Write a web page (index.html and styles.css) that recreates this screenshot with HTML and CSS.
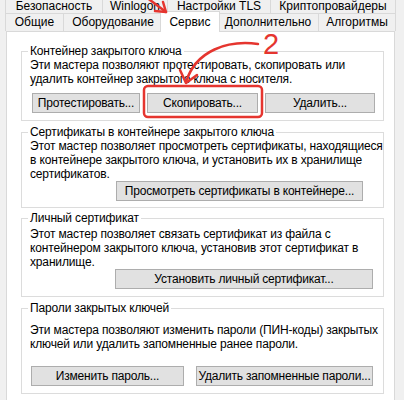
FILE: index.html
```html
<!DOCTYPE html>
<html lang="ru">
<head>
<meta charset="utf-8">
<link rel="stylesheet" href="styles.css">
</head>
<body>
<div class="root">
  <div class="tabs">
    <div class="tabrow row1">
      <div class="tab t-bez">Безопасность</div>
      <div class="tab t-win">Winlogon</div>
      <div class="tab t-tls">Настройки TLS</div>
      <div class="tab t-kri">Криптопровайдеры</div>
    </div>
    <div class="tabrow row2">
      <div class="tab t-obs">Общие</div>
      <div class="tab t-obo">Оборудование</div>
      <div class="tab tab-active">Сервис</div>
      <div class="tab t-dop">Дополнительно</div>
      <div class="tab t-alg">Алгоритмы</div>
    </div>
  </div>
  <div class="panel">
    <fieldset class="group g1">
      <legend>Контейнер закрытого ключа</legend>
      <p class="desc">Эти мастера позволяют протестировать, скопировать или<br>удалить контейнер закрытого ключа с носителя.</p>
      <div class="btnrow r1">
        <button class="btn b-test">Протестировать...</button>
        <button class="btn b-copy">Скопировать...</button>
        <button class="btn b-del">Удалить...</button>
      </div>
    </fieldset>
    <fieldset class="group g2">
      <legend>Сертификаты в контейнере закрытого ключа</legend>
      <p class="desc">Этот мастер позволяет просмотреть сертификаты, находящиеся<br>в контейнере закрытого ключа, и установить их в хранилище<br>сертификатов.</p>
      <div class="btnrow r2">
        <button class="btn b-view">Просмотреть сертификаты в контейнере...</button>
      </div>
    </fieldset>
    <fieldset class="group g3">
      <legend>Личный сертификат</legend>
      <p class="desc">Этот мастер позволяет связать сертификат из файла с<br>контейнером закрытого ключа, установив этот сертификат в<br>хранилище.</p>
      <div class="btnrow r3">
        <button class="btn b-inst">Установить личный сертификат...</button>
      </div>
    </fieldset>
    <fieldset class="group g4">
      <legend>Пароли закрытых ключей</legend>
      <p class="desc">Эти мастера позволяют изменить пароли (ПИН-коды) закрытых<br>ключей или удалить запомненные ранее пароли.</p>
      <div class="btnrow r4">
        <button class="btn b-chg">Изменить пароль...</button>
        <button class="btn b-rem">Удалить запомненные пароли...</button>
      </div>
    </fieldset>
  </div>
  <svg class="marks" width="404" height="400" viewBox="0 0 404 400">
    <g fill="none" stroke="#e5352f" stroke-width="2.5" stroke-linecap="round" stroke-linejoin="round">
      <rect x="144" y="86" width="118" height="31" rx="4"/>
      <path d="M146 -3 L166 12"/>
      <path d="M155 11 L166 12 L163 2"/>
      <path d="M258 44 C 228 40 196 50 186 82"/>
      <path d="M180 70 L186 83 L197 75"/>
    </g>
  </svg>
  <span class="num">2</span>
</div>
</body>
</html>
```
FILE: styles.css
```css
html, body {
  margin: 0;
  padding: 0;
  background: #f0f0f0;
}
body {
  font-family: "Liberation Sans", Arial, sans-serif;
  font-size: 12px;
  color: #000;
}
.root {
  position: relative;
  width: 404px;
  height: 400px;
  overflow: hidden;
}
.tabrow {
  display: flex;
  padding-left: 5px;
}
.row1 {
  height: 13px;
}
.row2 {
  height: 18px;
}
.tab {
  box-sizing: border-box;
  height: 18px;
  border: 1px solid #d9d9d9;
  border-bottom: none;
  background: #f0f0f0;
  margin-left: -1px;
  text-align: center;
  line-height: 17px;
  white-space: nowrap;
}
.row1 .tab {
  height: 13px;
  line-height: 13px;
  border-top: none;
}
.tab:first-child {
  margin-left: 0;
}
.t-bez { width: 98px; }
.t-win { width: 66px; }
.t-tls { width: 104px; }
.t-kri { width: 126px; }
.t-obs { width: 59px; }
.t-obo { width: 100px; }
.t-dop { width: 102px; margin-left: -1px; }
.t-alg { width: 78px; }
.tab-active {
  position: relative;
  z-index: 2;
  width: 60px;
  height: 21px;
  margin-top: -2px;
  margin-left: -3px;
  margin-right: -2px;
  background: #fff;
  line-height: 20px;
}
.panel {
  position: relative;
  z-index: 1;
  box-sizing: border-box;
  margin-left: 6px;
  width: 389px;
  height: 380px;
  background: #fff;
  border: 1px solid #d9d9d9;
  padding: 12px 10px 0 14px;
  letter-spacing: -0.15px;
}
.group {
  margin: 0 0 3px 0;
  padding: 0 0 0 8px;
  border: 1px solid #dcdcdc;
  min-width: 0;
}
.group legend {
  margin-left: -2px;
  padding: 0 2px;
  line-height: 14px;
}
.desc {
  margin: 0;
  line-height: 14px;
  white-space: nowrap;
}
.btnrow {
  display: flex;
  gap: 7px;
}
.btn {
  box-sizing: border-box;
  height: 20px;
  padding: 0;
  margin: 0;
  border: 1px solid #adadad;
  background: #e1e1e1;
  font-family: inherit;
  font-size: 12px;
  letter-spacing: -0.2px;
  color: #000;
  line-height: 18px;
  white-space: nowrap;
}
.g1 { margin-bottom: 4px; }
.r1 { margin: 7px 0 7px 2px; }
.b-test { width: 108px; }
.b-copy { width: 111px; }
.b-del { width: 110px; }
.r2 { justify-content: flex-end; margin: 0 20px 6px 0; }
.b-view { width: 247px; }
.g3 { margin-bottom: 4px; }
.g3 .desc { margin-top: 2px; }
.r3 { justify-content: flex-end; margin: 0 10px 7px 0; }
.b-inst { width: 258px; }
.g4 .desc { margin-top: 8px; }
.r4 { justify-content: space-between; margin: 15px 10px 7px 1px; }
.b-chg { width: 153px; }
.b-rem { width: 177px; }
.marks {
  position: absolute;
  left: 0;
  top: 0;
  z-index: 5;
  pointer-events: none;
}
.num {
  position: absolute;
  left: 263px;
  top: 33px;
  z-index: 6;
  font-family: "Liberation Sans", sans-serif;
  font-size: 29px;
  line-height: 22px;
  color: #e5352f;
}
```
